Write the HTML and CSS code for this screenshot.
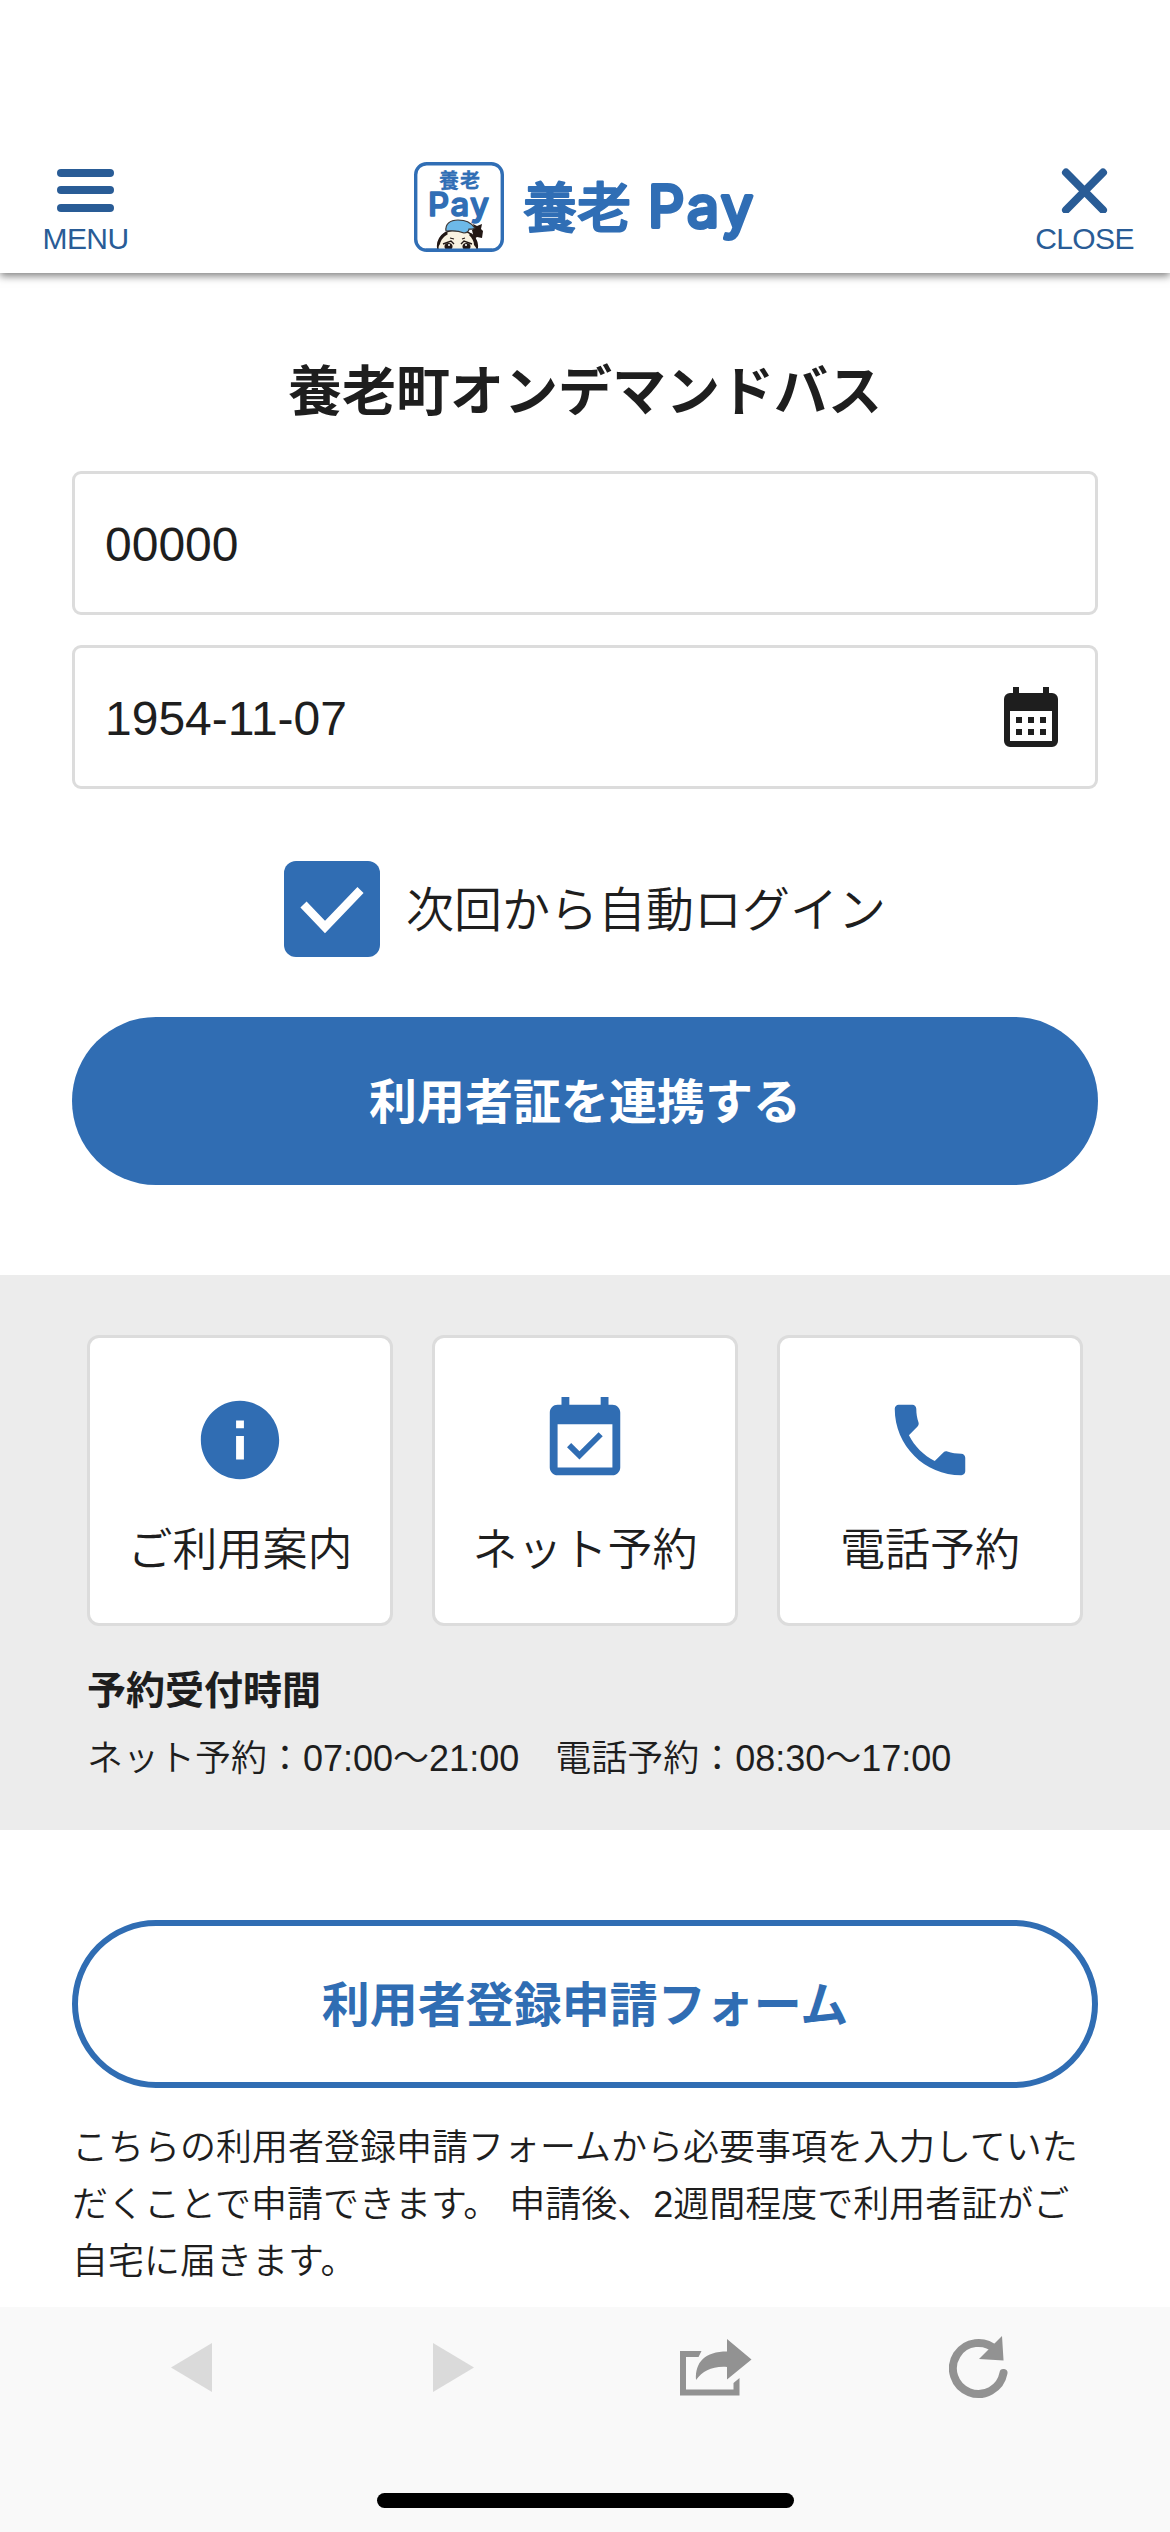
FILE: index.html
```html
<!DOCTYPE html>
<html lang="ja">
<head>
  <meta charset="UTF-8">
  <title>養老町オンデマンドバス</title>
  <link rel="stylesheet" href="styles.css">
</head>
<body>
  <header class="header">
    <button type="button" class="nav-btn">
      <svg class="nav-icon" viewBox="0 0 57 46">
        <rect y="2" width="57" height="8" rx="4"/>
        <rect y="19" width="57" height="8" rx="4"/>
        <rect y="37" width="57" height="8" rx="4"/>
      </svg>
      MENU
    </button>
    <div class="logo">
      <svg class="logo-mark" viewBox="0 0 90 90">
        <rect x="1.7" y="1.7" width="86.6" height="86.6" rx="11" fill="#fff" stroke="#306eb5" stroke-width="3.4"/>
        <text class="mark-kanji" x="25" y="26" textLength="41">養老</text>
        <text class="mark-pay" x="14" y="54" textLength="61">Pay</text>
        <path d="M58 68l2-2-1-4 4 2 5-2-1 5 2 2-1 7-5-1-3 2z" fill="#231815"/>
        <path d="M24 88c-2-12 6-20 19-20s22 8 20 20z" fill="#faf3e1" stroke="#231815" stroke-width="1.6"/>
        <path d="M23 87c0-8 3-13 9-17l2 2c-5 3-7 6-8 10zM63 87c1-7-1-12-6-16l-2 2c3 3 5 6 5 10z" fill="#231815"/>
        <path d="M32 69c-1-7 4-11 12-11 8 0 12 2 17 8-2 2-4 1-6 1 0 2-2 4-5 4-7-3-12-2-18-2z" fill="#6db9e8" stroke="#3b3532" stroke-width="1.2"/>
        <path d="M36 76l4 1M48 77l3-1" stroke="#231815" stroke-width="1.2"/>
        <path d="M29 82l8-3 3 3M47 82l3-3 8 3" fill="none" stroke="#231815" stroke-width="1.4"/>
        <ellipse cx="34.5" cy="84.5" rx="4" ry="3.5" fill="#231815"/>
        <ellipse cx="52.5" cy="84.5" rx="4" ry="3.5" fill="#231815"/>
        <path d="M34 83h2M51 83h2" stroke="#fff" stroke-width="1.5"/>
        <path d="M12 88.3h66" stroke="#306eb5" stroke-width="3.4"/>
      </svg>
      <svg class="logo-text" viewBox="0 -10 234 84">
        <text class="text-kanji" x="1" y="53" textLength="108">養老</text>
        <text class="text-pay" x="126" y="52" textLength="105">Pay</text>
      </svg>
    </div>
    <button type="button" class="nav-btn">
      <svg class="nav-icon" viewBox="0 0 57 46">
        <path d="M10 5.5L47 43M47 5.5L10 43" stroke="#295c96" stroke-width="8" stroke-linecap="round"/>
      </svg>
      CLOSE
    </button>
  </header>

  <main>
    <form class="login">
      <h1>養老町オンデマンドバス</h1>
      <div class="field">00000</div>
      <div class="field">
        1954-11-07
        <svg class="calendar" viewBox="0 0 54 60" fill="#1e1e1e">
          <path fill-rule="evenodd" d="M9 0h6v6h24V0h6v6h3a6 6 0 0 1 6 6v42a6 6 0 0 1-6 6H6a6 6 0 0 1-6-6V12a6 6 0 0 1 6-6h3zM6 24v30h42V24z"/>
          <path d="M12 30h6v6h-6zM24 30h6v6h-6zM36 30h6v6h-6zM12 42h6v6h-6zM24 42h6v6h-6zM36 42h6v6h-6z"/>
        </svg>
      </div>
      <label class="auto-login">
        <span class="checkbox">
          <svg viewBox="0 0 96 96"><path d="M19.5 43.5L41 66 76.5 29" fill="none" stroke="#fff" stroke-width="8.5"/></svg>
        </span>
        <span class="label">次回から自動ログイン</span>
      </label>
      <button type="button" class="btn btn-primary">利用者証を連携する</button>
    </form>

    <section class="guide">
      <div class="cards">
        <a class="card">
          <svg viewBox="0 0 24 24"><path d="M12 2C6.48 2 2 6.48 2 12s4.48 10 10 10 10-4.48 10-10S17.52 2 12 2zm1 15h-2v-6h2v6zm0-8h-2V7h2v2z"/></svg>
          ご利用案内
        </a>
        <a class="card">
          <svg viewBox="0 0 24 24"><path d="M16.53 11.06L15.47 10l-4.88 4.88-2.12-2.12-1.06 1.06L10.59 17l5.94-5.94zM19 3h-1V1h-2v2H8V1H6v2H5c-1.11 0-1.99.9-1.99 2L3 19c0 1.1.89 2 2 2h14c1.1 0 2-.9 2-2V5c0-1.1-.9-2-2-2zm0 16H5V8h14v11z"/></svg>
          ネット予約
        </a>
        <a class="card">
          <svg viewBox="0 0 24 24"><path d="M20 15.5c-1.25 0-2.45-.2-3.57-.57-.1-.03-.21-.05-.31-.05-.26 0-.51.1-.71.29l-2.2 2.2c-2.83-1.44-5.15-3.75-6.59-6.59l2.2-2.2c.28-.28.36-.67.25-1.02C8.7 6.45 8.5 5.25 8.5 4c0-.55-.45-1-1-1H4c-.55 0-1 .45-1 1 0 9.39 7.61 17 17 17 .55 0 1-.45 1-1v-3.500c0-.55-.45-1-1-1z"/></svg>
          電話予約
        </a>
      </div>
      <h2>予約受付時間</h2>
      <p>ネット予約：07:00〜21:00　電話予約：08:30〜17:00</p>
    </section>

    <section class="register">
      <button type="button" class="btn btn-outline">利用者登録申請フォーム</button>
      <p>こちらの利用者登録申請フォームから必要事項を入力していただくことで申請できます。 申請後、2週間程度で利用者証がご自宅に届きます。</p>
    </section>
  </main>

  <footer class="toolbar">
    <div class="tools">
      <svg class="arrow" width="41" height="49" viewBox="0 0 41 49"><path d="M41 0v49L0 24.5z" fill="#dadada"/></svg>
      <svg class="arrow" width="41" height="49" viewBox="0 0 41 49"><path d="M0 0v49l41-24.5z" fill="#dadada"/></svg>
      <svg class="share" width="72" height="58" viewBox="0 0 72 58" fill="#929292">
        <path d="M21.5 12H0v44.5h59.5V39l-6 5v6.5H6V18h12.5z"/>
        <path d="M47 0l24.5 20.5L47 40.5V28c-15-1-24 4-31 13C15 23 25 12.5 47 12.5z"/>
      </svg>
      <svg width="60" height="64" viewBox="0 0 60 64">
        <path d="M47 14A25.500 25.500 0 1 0 54.500 37" fill="none" stroke="#929292" stroke-width="8" stroke-linecap="round"/>
        <path d="M53 0l1.5 24.5L30 23z" fill="#929292"/>
      </svg>
    </div>
    <div class="home-bar"></div>
  </footer>
</body>
</html>
```
FILE: styles.css
```css
* { box-sizing: border-box; }
body {
  margin: 0;
  height: 2532px;
  overflow: hidden;
  display: flex;
  flex-direction: column;
  background: #fff;
  color: #1e1e1e;
  font-family: "Liberation Sans", "Noto Sans CJK JP", sans-serif;
}
h1, h2, p { margin: 0; }
button { border: 0; padding: 0; background: none; font-family: inherit; }

.header {
  flex: none;
  height: 273px;
  padding: 162px 34px 0;
  display: flex;
  justify-content: space-between;
  align-items: flex-start;
  box-shadow: 0 3px 8px rgba(0, 0, 0, 0.5);
}
.nav-btn {
  width: 103px;
  display: flex;
  flex-direction: column;
  align-items: center;
  color: #295c96;
  font-size: 30px;
  letter-spacing: -0.6px;
  line-height: 34px;
  padding-top: 5px;
}
.nav-icon { width: 57px; height: 46px; margin-bottom: 9px; fill: #295c96; }
.logo { display: flex; align-items: center; gap: 18px; }
.logo-mark { width: 90px; height: 90px; }
.logo-text { width: 234px; height: 84px; }
.logo text { fill: #306eb5; stroke: #306eb5; stroke-linejoin: round; }
.mark-kanji { font: 700 20px "Noto Sans CJK JP", sans-serif; stroke-width: 0.3; }
.mark-pay { font: 500 33px Inter, sans-serif; stroke-width: 1.6; }
.text-kanji { font: 500 54px "Noto Sans CJK JP", sans-serif; stroke-width: 2; }
.text-pay { font: 400 57px Inter, sans-serif; stroke-width: 4; }

.login { padding: 74px 72px 90px; }
h1 { font-size: 54px; line-height: 90px; text-align: center; margin-bottom: 34px; }
.field {
  height: 144px;
  margin-bottom: 30px;
  padding: 2px 37px 0 30px;
  border: 3px solid #dcdcdc;
  border-radius: 9px;
  display: flex;
  align-items: center;
  justify-content: space-between;
  font-size: 48px;
}
.calendar { width: 54px; height: 60px; margin-top: -2px; }
.auto-login {
  display: flex;
  align-items: center;
  justify-content: center;
  gap: 26px;
  margin: 72px 0 60px;
  font-size: 48px;
  font-weight: 350;
}
.label { padding-bottom: 6px; }
.checkbox { width: 96px; height: 96px; border-radius: 12px; background: #306db3; }
.btn {
  display: block;
  width: 100%;
  height: 168px;
  padding-bottom: 6px;
  border-radius: 84px;
  font-size: 48px;
  font-weight: 700;
}
.btn-primary { background: #306db3; color: #fff; }
.btn-outline { border: 6px solid #306db3; color: #306db3; }

.guide { height: 555px; padding: 60px 87px 0; background: #ececec; }
.cards { display: grid; grid-template-columns: repeat(3, 1fr); gap: 39px; }
.card {
  height: 291px;
  padding-top: 55px;
  border: 3px solid #dcdcdc;
  border-radius: 12px;
  background: #fff;
  display: flex;
  flex-direction: column;
  align-items: center;
  font-size: 45px;
  font-weight: 350;
  line-height: 66px;
}
.card svg { width: 94px; height: 94px; margin-bottom: 31px; fill: #306db3; }
h2 { font-size: 39px; line-height: 60px; margin-top: 35px; }
.guide p { font-size: 36px; line-height: 57px; margin-top: 9px; font-weight: 350; }

.register { padding: 90px 72px 0; }
.register p { margin-top: 31px; font-size: 36px; line-height: 57px; font-weight: 350; }

.toolbar { margin-top: auto; flex: none; height: 225px; background: #f9f9f9; }
.tools {
  height: 186px;
  padding: 29px 60px 0;
  display: grid;
  grid-template-columns: repeat(4, 1fr);
  justify-items: center;
  align-items: start;
}
.arrow { margin-top: 7px; }
.share { margin-top: 3px; }
.home-bar { width: 417px; height: 15px; margin: 0 auto; border-radius: 8px; background: #000; }
```
